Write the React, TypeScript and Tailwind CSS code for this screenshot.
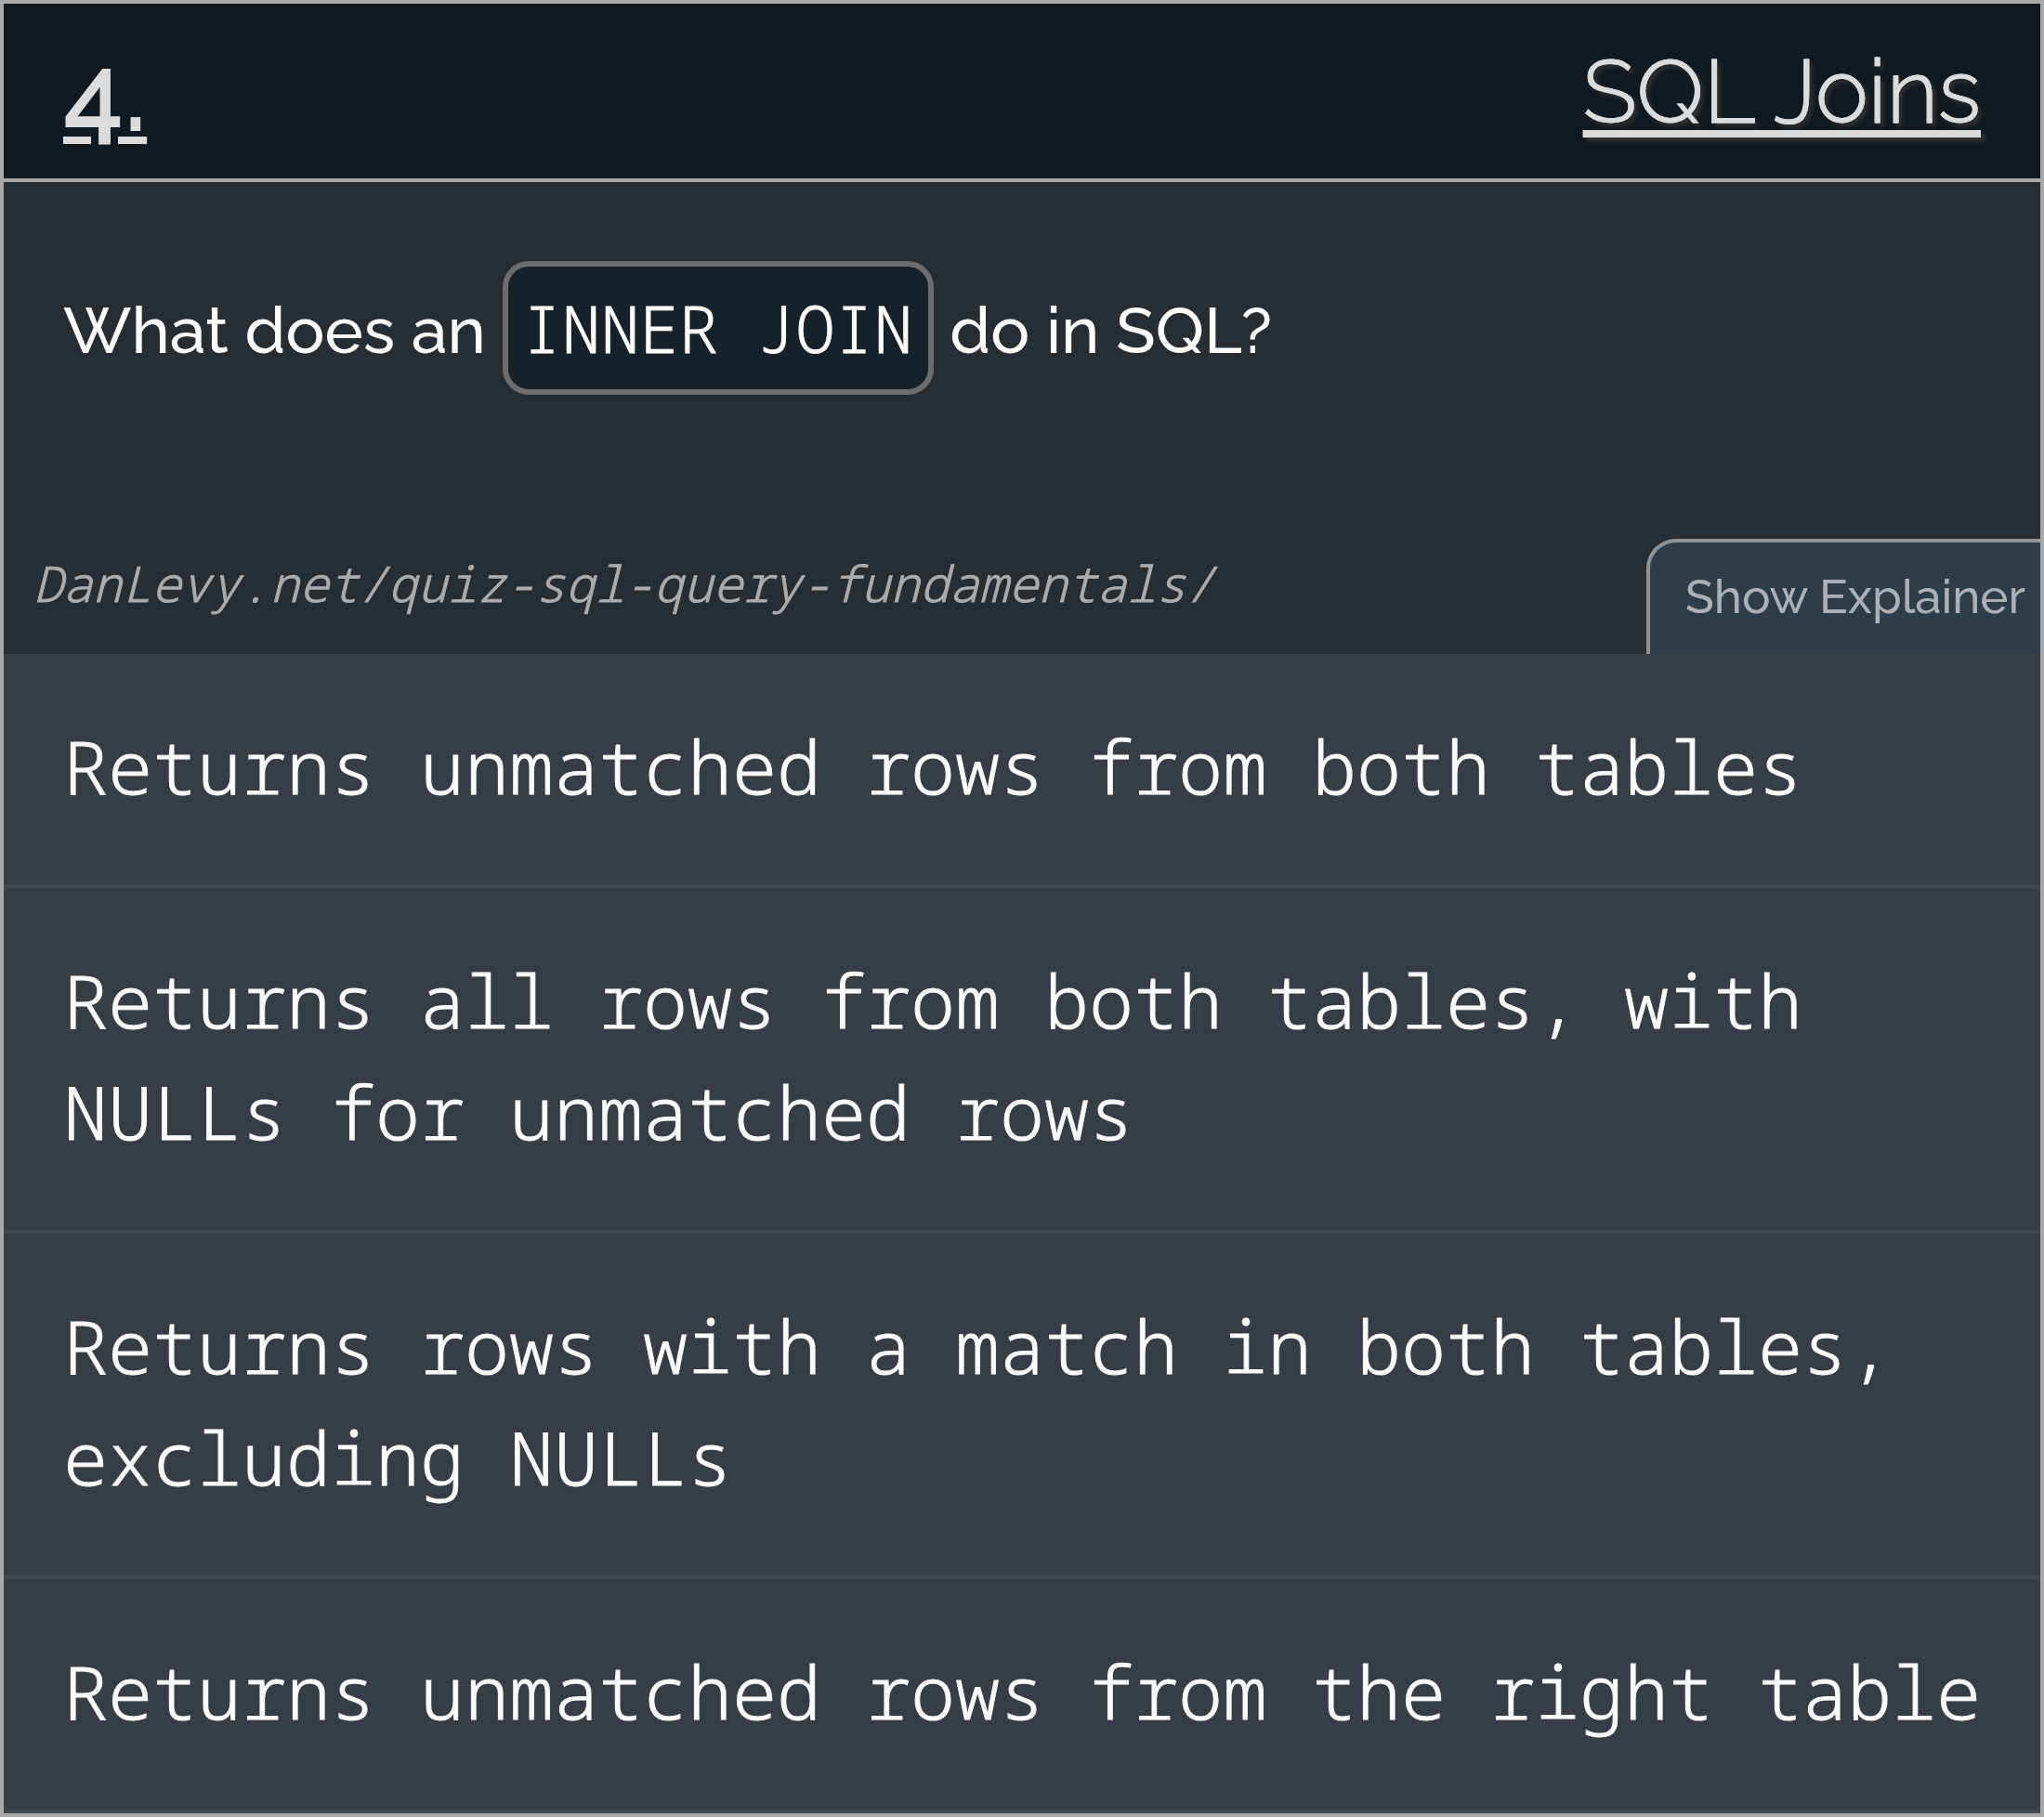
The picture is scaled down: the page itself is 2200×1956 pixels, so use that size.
const answers = [
  "Returns unmatched rows from both tables",
  "Returns all rows from both tables, with NULLs for unmatched rows",
  "Returns rows with a match in both tables, excluding NULLs",
  "Returns unmatched rows from the right table",
];

function QuizHeader() {
  return (
    <header className="flex h-48 items-center justify-between border-b-4 border-[#a9a9a9] bg-[#121a21] px-16 text-[#d9dbdd]">
      <a
        href="#question-4"
        className="pt-1 text-[116px] leading-[120px] font-semibold underline decoration-8 underline-offset-[6px]"
      >
        4.
      </a>
      <h1 className="text-[96px] leading-[120px] font-light">
        <a
          href="#sql-joins"
          className="underline decoration-8 underline-offset-8 [-webkit-text-stroke:1px] [text-shadow:4px_4px_4px_#333333]"
        >
          SQL Joins
        </a>
      </h1>
    </header>
  );
}

function Question() {
  return (
    <section className="flex flex-col bg-[#262d33]">
      <p className="px-16 pt-[85px] pb-[151px] text-[70px] leading-[148px] font-medium text-white">
        What does an{" "}
        <code className="rounded-[28px] border-[6px] border-[#6b6d6f] bg-[#16212a] px-4 py-[18px] font-['Noto_Sans_Mono',monospace] text-[70px] leading-none font-light [-webkit-text-stroke:1px]">
          INNER JOIN
        </code>{" "}
        do in SQL?
      </p>
      <div className="flex items-end justify-between pl-8">
        <a
          href="#quiz-sql-query-fundamentals"
          className="pb-9 font-['Noto_Sans_Mono',monospace] text-[53px] leading-[80px] font-light text-[#a9abae] italic [-webkit-text-stroke:1px]"
        >
          DanLevy.net/quiz-sql-query-fundamentals/
        </a>
        <button
          type="button"
          className="rounded-tl-[32px] border-t-4 border-l-4 border-[#8c9296] bg-[#2f3d49] pt-[26px] pr-4 pb-[30px] pl-[38px] text-[51px] leading-[64px] font-medium text-[#aab0b5]"
        >
          Show Explainer
        </button>
      </div>
    </section>
  );
}

export default function App() {
  return (
    <main className="border-4 border-[#a9a9a9] bg-[#363d44] font-[Raleway,sans-serif]">
      <QuizHeader />
      <Question />
      <ul>
        {answers.map((answer) => (
          <li key={answer}>
            <button
              type="button"
              className="block w-full border-b-4 border-[#42494c] px-16 pt-[60px] pb-[68px] text-left font-['Noto_Sans_Mono',monospace] text-[80px] leading-[120px] font-light text-[#fafbfd] [-webkit-text-stroke:1px]"
            >
              {answer}
            </button>
          </li>
        ))}
      </ul>
    </main>
  );
}
